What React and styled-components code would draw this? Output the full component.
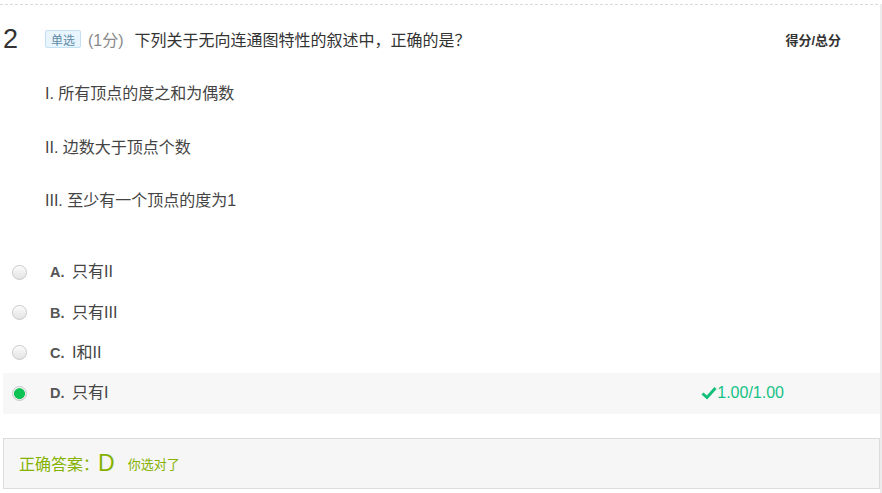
import React from "react";
import styled, { createGlobalStyle } from "styled-components";

const Global = createGlobalStyle`
  html, body { margin: 0; padding: 0; background: #fff; }
  body { font-family: "Liberation Sans", "Noto Sans CJK SC", sans-serif; color: #333; }
`;

const Page = styled.div`
  width: 880px;
  height: 493px;
  border-right: 2px solid #ececec;
  box-sizing: content-box;
`;

const Divider = styled.div`
  margin-top: 4px;
  width: 878px;
  border-top: 1px dashed #d9d9d9;
`;

const Header = styled.div`
  display: flex;
  align-items: center;
  height: 24px;
  padding-top: 22px;
`;

const Num = styled.span`
  width: 42px;
  margin-left: 3px;
  font-size: 27px;
  line-height: 24px;
  color: #333;
`;

const Badge = styled.span`
  display: inline-flex;
  align-items: center;
  height: 18px;
  padding: 0 5px;
  border: 1px solid #c3e1f5;
  border-radius: 2px;
  background: #e8f5fd;
  color: #5f8aa6;
  font-size: 12px;
  box-sizing: border-box;
`;

const Score = styled.span`
  margin-left: 7px;
  color: #8a8a8a;
  font-size: 16px;
`;

const Title = styled.span`
  margin-left: 11px;
  font-size: 16px;
  color: #333;
`;

const ScoreHead = styled.span`
  margin-left: auto;
  padding-right: 39px;
  font-size: 13px;
  font-weight: bold;
  color: #333;
`;

const Statements = styled.div`
  display: flex;
  flex-direction: column;
  gap: 33.5px;
  padding-left: 45px;
  margin-top: 33px;
`;

const Stmt = styled.div`
  font-size: 16px;
  line-height: 20px;
  color: #444;
`;

const Options = styled.div`
  margin-top: 41px;
  display: flex;
  flex-direction: column;
`;

const Row = styled.div`
  display: flex;
  align-items: center;
  height: 40.4px;
  margin-left: 3px;
  padding-left: 9px;
  background: ${(p) => (p.$active ? "#f7f7f7" : "transparent")};
`;

const Radio = styled.span`
  width: 15px;
  height: 15px;
  border-radius: 50%;
  border: 1px solid #c8c8c8;
  box-sizing: border-box;
  background: ${(p) =>
    p.$checked
      ? "radial-gradient(circle, #0cc253 0 5.2px, #e9e9e9 5.8px)"
      : "linear-gradient(#fbfbfb, #e3e3e3)"};
  box-shadow: inset 0 1px 1px rgba(255,255,255,0.8);
`;

const Letter = styled.span`
  margin-left: 23px;
  width: 22px;
  font-size: 14.5px;
  line-height: 20px;
  font-weight: bold;
  color: #555;
`;

const OptText = styled.span`
  font-size: 16px;
  line-height: 20px;
  color: #444;
`;

const Result = styled.span`
  margin-left: auto;
  padding-right: 96px;
  display: flex;
  align-items: center;
  color: #14c285;
  font-size: 16px;
`;

const AnswerBox = styled.div`
  margin: 24px 0 0 3px;
  width: 877px;
  height: 51px;
  box-sizing: border-box;
  border: 1px solid #dcdcdc;
  background: #f6f6f6;
  display: flex;
  align-items: center;
  padding-left: 15px;
  color: #85b200;
`;

const AnsLabel = styled.span`
  font-size: 16px;
`;

const AnsLetter = styled.span`
  font-size: 23px;
  margin-left: -1px;
`;

const AnsNote = styled.span`
  font-size: 13px;
  margin-left: 13px;
`;

const Check = () => (
  <svg width="16" height="14" viewBox="0 0 16 14">
    <path d="M1.5 7.5 L6 11.5 L14.5 2" fill="none" stroke="#12c07a" strokeWidth="3" strokeLinejoin="miter" />
  </svg>
);

const options = [
  { k: "A.", t: "只有II" },
  { k: "B.", t: "只有III" },
  { k: "C.", t: "I和II" },
  { k: "D.", t: "只有I", checked: true },
];

export default function App() {
  return (
    <Page>
      <Global />
      <Divider />
      <Header>
        <Num>2</Num>
        <Badge>单选</Badge>
        <Score>(1分)</Score>
        <Title>下列关于无向连通图特性的叙述中，正确的是？</Title>
        <ScoreHead>得分/总分</ScoreHead>
      </Header>
      <Statements>
        <Stmt>I. 所有顶点的度之和为偶数</Stmt>
        <Stmt>II. 边数大于顶点个数</Stmt>
        <Stmt>III. 至少有一个顶点的度为1</Stmt>
      </Statements>
      <Options>
        {options.map((o) => (
          <Row key={o.k} $active={o.checked}>
            <Radio $checked={o.checked} />
            <Letter>{o.k}</Letter>
            <OptText>{o.t}</OptText>
            {o.checked && (
              <Result>
                <Check />
                1.00/1.00
              </Result>
            )}
          </Row>
        ))}
      </Options>
      <AnswerBox>
        <AnsLabel>正确答案：</AnsLabel>
        <AnsLetter>D</AnsLetter>
        <AnsNote>你选对了</AnsNote>
      </AnswerBox>
    </Page>
  );
}
